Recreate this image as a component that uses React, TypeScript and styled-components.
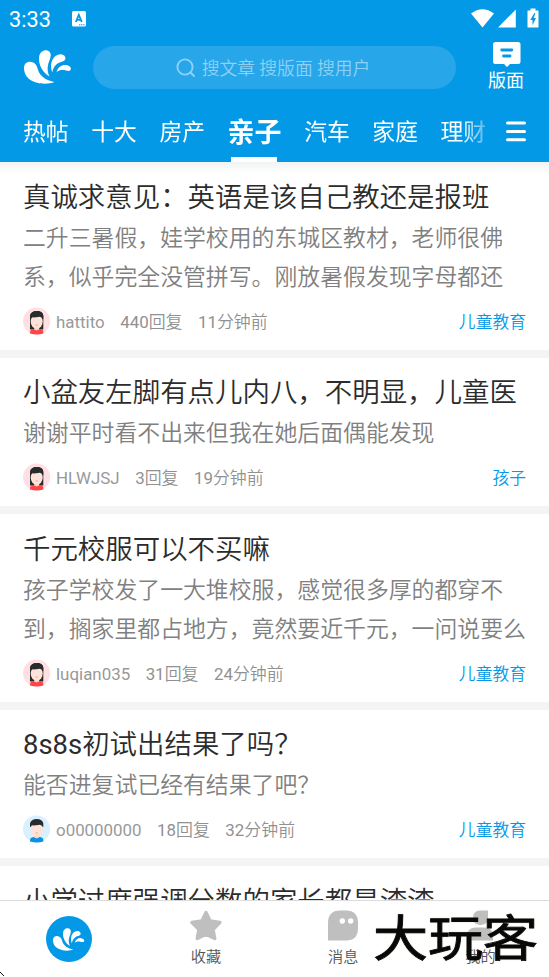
import React from 'react';
import styled, { createGlobalStyle } from 'styled-components';

const BLUE = '#0399e7';

const GlobalStyle = createGlobalStyle`
  * { box-sizing: border-box; }
  html, body { margin: 0; padding: 0; }
  body {
    background: #fff;
    font-family: Roboto, "Noto Sans CJK SC", sans-serif;
    font-weight: 350;
    overflow: hidden;
  }
`;

const Screen = styled.div`
  position: relative;
  display: flex;
  flex-direction: column;
  width: 549px;
  height: 977px;
  overflow: hidden;
  background: #fff;
`;

const Header = styled.header`
  flex: none;
  height: 162px;
  background: ${BLUE};
  color: #fff;
`;

const StatusBar = styled.div`
  display: flex;
  align-items: center;
  height: 37px;
  padding: 0 10px 0 9px;
`;

const Clock = styled.span`
  width: 62px;
  font-size: 21.7px;
  line-height: 36px;
  font-weight: 400;
  padding-top: 2px;
`;

const StatusIcons = styled.div`
  display: flex;
  align-items: center;
  gap: 3px;
  margin-left: auto;
`;

const SearchRow = styled.div`
  display: flex;
  height: 64px;
  padding: 0 24px 0 23px;
`;

const LogoSlot = styled.div`
  width: 70px;
  padding: 13px 0 0 1px;
`;

const SearchBox = styled.div`
  display: flex;
  align-items: center;
  justify-content: center;
  gap: 6px;
  width: 363px;
  height: 43px;
  margin-top: 9px;
  padding-right: 3px;
  border-radius: 22px;
  background: #28a6ea;
  color: #8ed1f5;
  font-size: 17.8px;
  white-space: pre;
`;

const SearchHint = styled.span`
  margin-top: -2px;
`;

const BoardButton = styled.div`
  display: flex;
  flex-direction: column;
  align-items: center;
  width: 37px;
  margin-left: auto;
  padding-top: 5px;
  font-size: 18px;
  font-weight: 400;
  line-height: 25px;
  white-space: nowrap;
`;

const BoardLabel = styled.span`
  margin: 1px 1px 0 0;
`;

const TabRow = styled.nav`
  display: flex;
  height: 61px;
  padding-left: 23px;
`;

const Tabs = styled.div`
  display: flex;
  gap: 22.6px;
  width: 463px;
  overflow: hidden;
  mask-image: linear-gradient(to right, #000 438px, rgba(0, 0, 0, 0.3) 463px);
`;

const Tab = styled.div<{ $active?: boolean }>`
  flex: none;
  height: 61px;
  padding-top: 12px;
  font-size: ${p => (p.$active ? 27 : 22.8)}px;
  font-weight: ${p => (p.$active ? 700 : 400)};
  line-height: 40px;
  background: ${p => (p.$active ? 'linear-gradient(#fff, #fff) 3px 100% / 46px 5px no-repeat' : 'none')};
`;

const MenuButton = styled.div`
  padding: 20px 0 0 20px;
`;

const Feed = styled.main`
  flex: none;
  height: 738px;
  overflow: hidden;
  background: linear-gradient(#f1f4f4, rgba(255, 255, 255, 0) 12px), #fff;
`;

const Card = styled.article<{ $lines: number }>`
  padding: ${p => (p.$lines === 2 ? 16 : 15.4)}px 23px 0;
  border-bottom: 8px solid #f3f5f5;
  height: ${p => (p.$lines === 2 ? 195.5 : 156.6)}px;
`;

const Title = styled.h2`
  margin: 0;
  height: 42px;
  font-size: 27.45px;
  font-weight: 350;
  line-height: 40px;
  color: #2c2c2c;
  white-space: nowrap;
`;

const Excerpt = styled.p`
  margin: 0;
  font-size: 22.87px;
  line-height: 38.7px;
  color: #808080;
  white-space: nowrap;
`;

const Meta = styled.div`
  display: flex;
  align-items: center;
  height: 28px;
  margin-top: 9.6px;
  font-size: 16.9px;
  line-height: 24px;
  color: #919191;
`;

const MetaText = styled.span`
  margin: 1px 15.5px 0 0;
`;

const Latin = styled.span`
  font-weight: 400;
`;

const Author = styled(MetaText)`
  margin-left: 5px;
  font-weight: 400;
  color: #999;
`;

const Board = styled.span`
  margin: 1px 0 0 auto;
  color: ${BLUE};
  font-size: 16.8px;
`;

const BottomNav = styled.footer`
  display: grid;
  grid-template-columns: repeat(4, 1fr);
  height: 77px;
  border-top: 1px solid #dcdcdc;
  background: #fff;
`;

const NavItem = styled.div`
  display: flex;
  flex-direction: column;
  align-items: center;
  padding-top: 9px;
  font-size: 15.2px;
  line-height: 24px;
  color: #555;
`;

const NavLabel = styled.span`
  margin-top: 4px;
`;

const HomeBadge = styled.div`
  display: flex;
  align-items: center;
  justify-content: center;
  width: 46px;
  height: 46px;
  margin-top: 6px;
  border-radius: 50%;
  background: ${BLUE};
`;

const Watermark = styled.div`
  position: absolute;
  left: 373px;
  top: 905px;
  font-family: "Noto Sans CJK SC", sans-serif;
  font-size: 55px;
  font-weight: 400;
  line-height: 60px;
  color: #080808;
  white-space: nowrap;
  transform: scaleY(0.88);
  -webkit-text-stroke: 0.9px #080808;
  text-shadow: 0 0 2px #bdb68d;
`;

const Corner = styled.svg`
  position: absolute;
  left: 0;
  bottom: 0;
`;

const Splash = ({ width, height }: { width: number; height: number }) => (
  <svg width={width} height={height} viewBox="0 0 48 34" fill="#fff">
    <path d="M0 18C0 13 4 11 7.5 12C12 13 13 16 14 20C16 26 22 30.5 30.5 32C23 35 11 34 5 29C1.5 26 0 22 0 18Z" />
    <path d="M15 7.5C15.5 2 19 0 22.5 .2C27 1 27.5 5 26 9C23.5 15 22.5 20 25.5 26.5C19 23 14.5 15 15 7.5Z" />
    <path d="M28.2 22.5C25 13 29 5 36 4.2C40 4 42.5 7 41 10C39.5 12 36.5 11.5 33.5 13.5C30.5 15.5 29 18.5 28.2 22.5Z" />
    <path d="M32.5 22C34 17 38 14.5 42 15C46 15.5 47.8 18 46.5 20C45 21.8 42.5 20.5 40 20C37 19.7 34.5 20.3 32.5 22Z" />
  </svg>
);

const Avatar = ({ male }: { male?: boolean }) => (
  <svg width="28" height="28" viewBox="0 0 28 28">
    <circle cx="13.6" cy="14" r="13.6" fill={male ? '#d9f0ff' : '#ffdfe2'} />
    {!male && <path d="M7 22.5V9Q8 4 14 4T20.3 9V22.5Z" fill="#292c2c" />}
    <path d="M7 26.6V25Q7 22.5 10.5 22H17Q20.3 22.5 20.3 25V26.6Q14 28.6 7 26.6Z" fill={male ? '#0b91df' : '#ff4646'} />
    <path d="M11.2 18H16.2V22.6Q13.7 24.2 11.2 22.6Z" fill="#f9d0c0" />
    <ellipse cx="13.7" cy="14.6" rx="6" ry="7.3" fill="#ffe3d8" />
    <path d="M7 12V8.5Q8 4 13.7 4Q19.5 4 20.3 8.5V12H19.8Q19.5 10.5 17 9.8Q11 10.6 9 10.3L7.6 12Z" fill="#292c2c" />
    <path d="M12.5 18H15" stroke="#f0ad9c" strokeWidth="1" />
  </svg>
);

const posts = [
  {
    title: '真诚求意见：英语是该自己教还是报班',
    lines: ['二升三暑假，娃学校用的东城区教材，老师很佛', '系，似乎完全没管拼写。刚放暑假发现字母都还'],
    author: 'hattito', replies: '440回复', age: '11分钟前', board: '儿童教育',
  },
  {
    title: '小盆友左脚有点儿内八，不明显，儿童医',
    lines: ['谢谢平时看不出来但我在她后面偶能发现'],
    author: 'HLWJSJ', replies: '3回复', age: '19分钟前', board: '孩子',
  },
  {
    title: '千元校服可以不买嘛',
    lines: ['孩子学校发了一大堆校服，感觉很多厚的都穿不', '到，搁家里都占地方，竟然要近千元，一问说要么'],
    author: 'luqian035', replies: '31回复', age: '24分钟前', board: '儿童教育',
  },
  {
    title: '8s8s初试出结果了吗？',
    lines: ['能否进复试已经有结果了吧？'],
    author: 'o00000000', replies: '18回复', age: '32分钟前', board: '儿童教育', male: true,
  },
];

const tabs = ['热帖', '十大', '房产', '亲子', '汽车', '家庭', '理财'];

// Leading Latin letters and digits use the regular weight beside the lighter Chinese.
const MixedText = ({ text }: { text: string }) => {
  const lead = text.match(/^[A-Za-z0-9]*/)?.[0] ?? '';
  return <>{lead && <Latin>{lead}</Latin>}{text.slice(lead.length)}</>;
};

export default function App() {
  return (
    <Screen>
      <GlobalStyle />
      <Header>
        <StatusBar>
          <Clock>3:33</Clock>
          <svg width="16" height="18" viewBox="0 0 16 18">
            <rect x="1" y="1" width="14" height="15.5" rx="1.5" fill="#fff" />
            <path d="M4.8 12L7.8 4.8L10.8 12M5.9 9.8H9.8" fill="none" stroke={BLUE} strokeWidth="1.8" />
            <path d="M8 14.8H14" stroke={BLUE} strokeWidth="1" strokeDasharray="1.2 .6" />
          </svg>
          <StatusIcons>
            <svg width="24" height="19" viewBox="0 0 24 19">
              <path d="M0 4.5Q11.5 -4 23 4.5L11.5 18.5Z" fill="#fff" />
            </svg>
            <svg width="18" height="19" viewBox="0 0 18 19">
              <path d="M17.8 0.5V18.5H0Z" fill="#fff" />
            </svg>
            <svg width="20" height="21" viewBox="0 0 20 21">
              <path d="M9 2.5H11.5V.5H16.5V2.5H19Q19.5 2.5 19.5 3V19Q19.5 19.5 19 19.5H9Q8.5 19.5 8.5 19V3Q8.5 2.5 9 2.5Z" fill="#fff" />
              <path d="M15.3 5L11.3 12H13.5V17.3L17 10H14.7L16.3 5.5Z" fill={BLUE} />
            </svg>
          </StatusIcons>
        </StatusBar>
        <SearchRow>
          <LogoSlot><Splash width={48} height={34} /></LogoSlot>
          <SearchBox>
            <svg width="20" height="20" viewBox="0 0 20 20" fill="none" stroke="#8ed1f5" strokeWidth="1.9" strokeLinecap="round">
              <circle cx="9" cy="9" r="7.6" />
              <path d="M14.5 14.5L18 18" />
            </svg>
            <SearchHint>搜文章 搜版面 搜用户</SearchHint>
          </SearchBox>
          <BoardButton>
            <svg width="28" height="25" viewBox="0 0 28 25">
              <path d="M2.5 0H25Q27.5 0 27.5 2.5V19.5Q27.5 22 25 22H17L14 25L11 22H2.5Q0 22 0 19.5V2.5Q0 0 2.5 0Z" fill="#fff" />
              <path d="M8.7 8H18.8M10.5 14H17" stroke={BLUE} strokeWidth="2.8" strokeLinecap="round" />
            </svg>
            <BoardLabel>版面</BoardLabel>
          </BoardButton>
        </SearchRow>
        <TabRow>
          <Tabs>
            {tabs.map(t => <Tab key={t} $active={t === '亲子'}>{t}</Tab>)}
          </Tabs>
          <MenuButton>
            <svg width="20" height="22" viewBox="0 0 20 22">
              <path d="M1.5 2H18.5M1.5 10.5H18.5M1.5 18.7H18.5" stroke="#fff" strokeWidth="3" strokeLinecap="round" />
            </svg>
          </MenuButton>
        </TabRow>
      </Header>
      <Feed>
        {posts.map(p => (
          <Card key={p.title} $lines={p.lines.length}>
            <Title><MixedText text={p.title} /></Title>
            {p.lines.map(l => <Excerpt key={l}>{l}</Excerpt>)}
            <Meta>
              <Avatar male={p.male} />
              <Author>{p.author}</Author>
              <MetaText><MixedText text={p.replies} /></MetaText>
              <MetaText><MixedText text={p.age} /></MetaText>
              <Board>{p.board}</Board>
            </Meta>
          </Card>
        ))}
        <Card $lines={1}><Title>小学过度强调分数的家长都是渣渣</Title></Card>
      </Feed>
      <BottomNav>
        <NavItem>
          <HomeBadge><Splash width={32} height={23} /></HomeBadge>
        </NavItem>
        <NavItem>
          <svg width="32" height="31" viewBox="0 0 32 31">
            <path d="M16 2.5L20 11L29.8 12.5L23 19.5L24.7 28.5L16 24.2L7.3 28.5L9 19.5L2 12.5L12 11Z" fill="#bfbfbf" stroke="#bfbfbf" strokeWidth="3.5" strokeLinejoin="round" />
          </svg>
          <NavLabel>收藏</NavLabel>
        </NavItem>
        <NavItem>
          <svg width="30" height="31" viewBox="0 0 30 31">
            <path d="M0 30.5V13Q0 .5 12 .5H18Q30 .5 30 13V18Q30 30.5 18 30.5Z" fill="#bfbfbf" />
            <circle cx="14.3" cy="11" r="2.7" fill="#fff" />
            <circle cx="22.7" cy="11" r="2.7" fill="#fff" />
          </svg>
          <NavLabel>消息</NavLabel>
        </NavItem>
        <NavItem>
          <svg width="26" height="31" viewBox="0 0 26 31">
            <path d="M6 8Q6 .5 13 .5H21V8Q21 15 13.5 15T6 8Z" fill="#bfbfbf" />
            <path d="M0 30.5V26Q0 17.5 9 17.5H17Q26 17.5 26 26V30.5Z" fill="#bfbfbf" />
          </svg>
          <NavLabel>我的</NavLabel>
        </NavItem>
      </BottomNav>
      <Watermark>大玩客</Watermark>
      <Corner width="5" height="5" viewBox="0 0 5 5" shapeRendering="crispEdges">
        <path d="M0 0H1V1H2V2H3V3H4V4H3V3H2V2H1V1H0Z" fill="#111" />
      </Corner>
    </Screen>
  );
}
